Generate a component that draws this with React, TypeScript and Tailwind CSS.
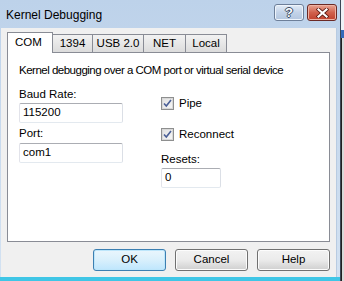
import * as React from "react";

const font = { fontFamily: '"Liberation Sans", Arial, sans-serif' };

const TitleButtons = () => (
  <div className="flex gap-[3px] pt-[4px]">
    <div className="w-[30px] h-[17px] rounded-[3px] border border-[#6d7f99] bg-gradient-to-b from-[#e3ecf7] via-[#c3d3e8] to-[#b3c6df] flex items-center justify-center shadow-[inset_0_0_0_1px_#eef4fb]">
      <span className="text-[13px] font-bold text-white leading-none [text-shadow:1px_0_0_#3a4a62,-1px_0_0_#3a4a62,0_1px_0_#3a4a62,0_-1px_0_#3a4a62]">?</span>
    </div>
    <div className="w-[30px] h-[17px] rounded-[3px] border border-[#6b2a25] bg-gradient-to-b from-[#e8a493] via-[#d0614c] to-[#c0402c] flex items-center justify-center shadow-[inset_0_0_0_1px_#eeb3a4]">
      <svg width="13" height="10" viewBox="0 0 13 10">
        <path d="M2.5 1.5 L10.5 8.5 M10.5 1.5 L2.5 8.5" stroke="#5a1a12" strokeWidth="3.8" strokeLinecap="square" />
        <path d="M2.5 1.5 L10.5 8.5 M10.5 1.5 L2.5 8.5" stroke="#ffffff" strokeWidth="2.2" strokeLinecap="square" />
      </svg>
    </div>
  </div>
);

const Tab = ({ label, active, w }: { label: string; active?: boolean; w: string }) =>
  active ? (
    <div className={`${w} h-[21px] -mb-px bg-white border border-b-0 border-[#898c95] flex items-center pl-[7px] z-10 whitespace-nowrap`}>
      {label}
    </div>
  ) : (
    <div className={`${w} h-[18px] mt-[2px] border border-b-0 border-l-0 border-[#898c95] bg-gradient-to-b from-[#f2f2f2] to-[#dcdcdc] flex items-center justify-center whitespace-nowrap`}>
      {label}
    </div>
  );

const TextBox = ({ value, w }: { value: string; w: string }) => (
  <div className={`${w} h-[20px] bg-white border border-[#abadb3] border-b-[#e3e9ef] border-l-[#e2e3ea] border-r-[#dbdfe6] rounded-[2px] flex items-center pl-[3px]`}>
    {value}
  </div>
);

const Check = ({ label }: { label: string }) => (
  <div className="h-[15px] flex items-center gap-[5px]">
    <div className="w-[13px] h-[13px] border border-[#8e8f8f] bg-[#f4f4f4] flex items-center justify-center">
      <div className="w-[11px] h-[11px] border border-[#d8d8d8] bg-gradient-to-br from-[#e2e2e2] to-[#f6f6f6] flex items-center justify-center">
        <svg width="9" height="9" viewBox="0 0 9 9">
          <path d="M1 4.5 L3.3 7 L8 1" fill="none" stroke="#4a5f97" strokeWidth="1.6" />
        </svg>
      </div>
    </div>
    <span>{label}</span>
  </div>
);

const DlgButton = ({ label, def }: { label: string; def?: boolean }) => (
  <div
    className={`w-[73px] h-[22px] rounded-[3px] border flex items-center justify-center ${
      def
        ? "border-[#3c7fb1] bg-gradient-to-b from-[#eaf6fd] via-[#d9f0fc] to-[#bee6fd] shadow-[inset_0_0_0_1px_#bde6fb]"
        : "border-[#707070] bg-gradient-to-b from-[#f2f2f2] via-[#ebebeb] to-[#cfcfcf] shadow-[inset_0_0_0_1px_#fcfcfc]"
    }`}
  >
    {label}
  </div>
);

export default function App() {
  return (
    <div className="w-[344px] h-[281px] flex overflow-hidden text-[11.5px] text-black" style={font}>
      <div className="w-[341px] h-full flex flex-col border-r border-[#3b4756] bg-gradient-to-b from-[#bdd2ea] to-[#d3e2f2]">
        <div className="h-[28px] flex items-start justify-between pl-[6px] pr-[3px]">
          <span className="pt-[6px] text-[12px]">Kernel Debugging</span>
          <TitleButtons />
        </div>
        <div className="flex-1 flex pl-px pr-[3px]">
          <div className="flex-1 bg-[#f0f0f0] flex flex-col px-[6px] pt-[4px] border-r border-[#b8cbe1]">
            <div className="flex items-end">
              <Tab label="COM" active w="w-[46px]" />
              <Tab label="1394" w="w-[40px]" />
              <Tab label="USB 2.0" w="w-[51px]" />
              <Tab label="NET" w="w-[42px]" />
              <Tab label="Local" w="w-[41px]" />
            </div>
            <div className="h-[190px] bg-white border border-[#898c95] pt-[10px] px-[11px] flex flex-col">
              <span className="leading-[15px] tracking-[-0.5px] whitespace-nowrap">Kernel debugging over a COM port or virtual serial device</span>
              <div className="flex mt-[9px]">
                <div className="w-[142px] flex flex-col">
                  <span className="leading-[15px]">Baud Rate:</span>
                  <div className="mt-px"><TextBox value="115200" w="w-[104px]" /></div>
                  <span className="leading-[15px] mt-[3px]">Port:</span>
                  <div className="mt-[2px]"><TextBox value="com1" w="w-[104px]" /></div>
                </div>
                <div className="flex flex-col">
                  <div className="mt-[9px]"><Check label="Pipe" /></div>
                  <div className="mt-[16px]"><Check label="Reconnect" /></div>
                  <span className="leading-[15px] mt-[10px]">Resets:</span>
                  <div className="mt-px"><TextBox value="0" w="w-[60px]" /></div>
                </div>
              </div>
            </div>
            <div className="flex justify-end gap-[9px] mt-[7px]">
              <DlgButton label="OK" def />
              <DlgButton label="Cancel" />
              <DlgButton label="Help" />
            </div>
          </div>
        </div>
        <div className="h-[4px] bg-[#3fc6e6]" />
      </div>
      <div className="flex-1 flex flex-col">
        <div className="h-[30px] bg-[#eef2f6]" />
        <div className="h-[8px] bg-[#3469b8]" />
        <div className="flex-1 bg-[#d9d9d9] border-l border-[#202020]" />
      </div>
    </div>
  );
}
